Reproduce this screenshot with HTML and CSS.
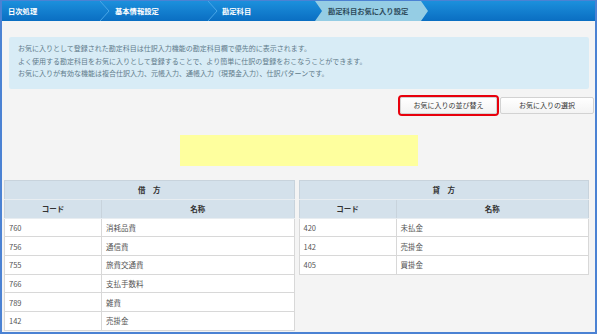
FILE: index.html
```html
<!DOCTYPE html>
<html lang="ja">
<head>
<meta charset="utf-8">
<link rel="stylesheet" href="styles.css">
</head>
<body>
<div class="frame">
  <nav class="crumbs">
    <div class="crumb c1">日次処理</div>
    <svg class="sep" width="10" height="20" viewBox="0 0 10 20"><polyline points="0,0 9,10 0,20" fill="none" stroke="#4aa6e6" stroke-width="1"/></svg>
    <div class="crumb c2">基本情報設定</div>
    <svg class="sep" width="10" height="20" viewBox="0 0 10 20"><polyline points="0,0 9,10 0,20" fill="none" stroke="#4aa6e6" stroke-width="1"/></svg>
    <div class="crumb c3">勘定科目</div>
    <div class="crumb active">勘定科目お気に入り設定</div>
  </nav>
  <main class="content">
    <div class="info">
      <p>お気に入りとして登録された勘定科目は仕訳入力機能の勘定科目欄で優先的に表示されます。</p>
      <p>よく使用する勘定科目をお気に入りとして登録することで、より簡単に仕訳の登録をおこなうことができます。</p>
      <p>お気に入りが有効な機能は複合仕訳入力、元帳入力、通帳入力（現預金入力）、仕訳パターンです。</p>
    </div>
    <div class="actions">
      <div class="highlight"><button class="btn">お気に入りの並び替え</button></div>
      <button class="btn">お気に入りの選択</button>
    </div>
    <div class="notice"></div>
    <div class="tables">
      <table class="tbl">
        <thead>
          <tr><th colspan="2" class="side">借　方</th></tr>
          <tr><th class="code">コード</th><th>名称</th></tr>
        </thead>
        <tbody>
          <tr><td>760</td><td>消耗品費</td></tr>
          <tr><td>756</td><td>通信費</td></tr>
          <tr><td>755</td><td>旅費交通費</td></tr>
          <tr><td>766</td><td>支払手数料</td></tr>
          <tr><td>789</td><td>雑費</td></tr>
          <tr><td>142</td><td>売掛金</td></tr>
        </tbody>
      </table>
      <table class="tbl">
        <thead>
          <tr><th colspan="2" class="side">貸　方</th></tr>
          <tr><th class="code">コード</th><th>名称</th></tr>
        </thead>
        <tbody>
          <tr><td>420</td><td>未払金</td></tr>
          <tr><td>142</td><td>売掛金</td></tr>
          <tr><td>405</td><td>買掛金</td></tr>
        </tbody>
      </table>
    </div>
  </main>
</div>
</body>
</html>
```
FILE: styles.css
```css
* { box-sizing: border-box; }
html, body { margin: 0; padding: 0; }
body {
  font-family: "Noto Sans CJK JP", "Noto Sans", sans-serif;
  background: #ffffff;
}
.frame {
  width: 597px;
  height: 334px;
  border: 2px solid #4b82d3;
  border-top: 1px solid #4b82d3;
  background: #f4f4f4;
  overflow: hidden;
}
.crumbs {
  display: flex;
  align-items: center;
  height: 20px;
  background: linear-gradient(#1c90dc, #0a6ec2);
}
.crumb {
  color: #ffffff;
  font-size: 7.3px;
  font-weight: bold;
  line-height: 20px;
  height: 20px;
  white-space: nowrap;
}
.c1 { width: 98px; padding-left: 6px; }
.c2 { width: 98px; padding-left: 5px; }
.c3 { width: 97px; padding-left: 4px; }
.sep { flex: none; display: block; }
.active {
  width: 113px;
  padding-left: 13px;
  color: #2d4a5a;
  background: #95cde4;
  clip-path: polygon(0 0, 106px 0, 113px 50%, 106px 100%, 0 100%, 7px 50%);
}
.content {
  padding: 16px 6px 0 7px;
}
.info {
  background: #d8ecf6;
  color: #5f7b8b;
  font-size: 7px;
  line-height: 12.5px;
  padding: 5px 9px 9px;
  border-radius: 2px;
}
.info p { margin: 0; }
.actions {
  display: flex;
  justify-content: flex-end;
  align-items: center;
  gap: 1px;
  margin: 6px -5px 0 0;
  height: 21px;
}
.highlight {
  display: flex;
  border: 2px solid #e8000c;
  border-radius: 4px;
}
.btn {
  display: block;
  font-family: inherit;
  font-size: 7px;
  color: #333;
  background: linear-gradient(#ffffff, #f3f3f3);
  border: 1px solid #d2d2d2;
  border-radius: 2px;
  height: 17px;
  padding: 0;
  width: 97px;
  line-height: 15px;
}
.actions > .btn { width: 94px; }
.notice {
  width: 238px;
  height: 31px;
  background: #feff9e;
  margin: 19px 0 0 171px;
}
.tables {
  display: flex;
  gap: 4px;
  margin: 14px 0 0 -5px;
  align-items: flex-start;
}
.tbl {
  width: 293px;
  border-collapse: collapse;
  background: #ffffff;
  font-size: 7.5px;
  color: #555;
  border: 1px solid #cfd5da;
}
.tbl th {
  background: #d4e1eb;
  color: #333;
  font-weight: bold;
  height: 19px;
  padding: 0;
  text-align: center;
  border: 1px solid #c8d3dc;
  border-bottom-color: #e8edf1;
}
.tbl th.code { width: 97px; }
.tbl td {
  height: 18.7px;
  padding: 0 4px;
  border: 1px solid #d8d8d8;
  text-align: left;
}
```
